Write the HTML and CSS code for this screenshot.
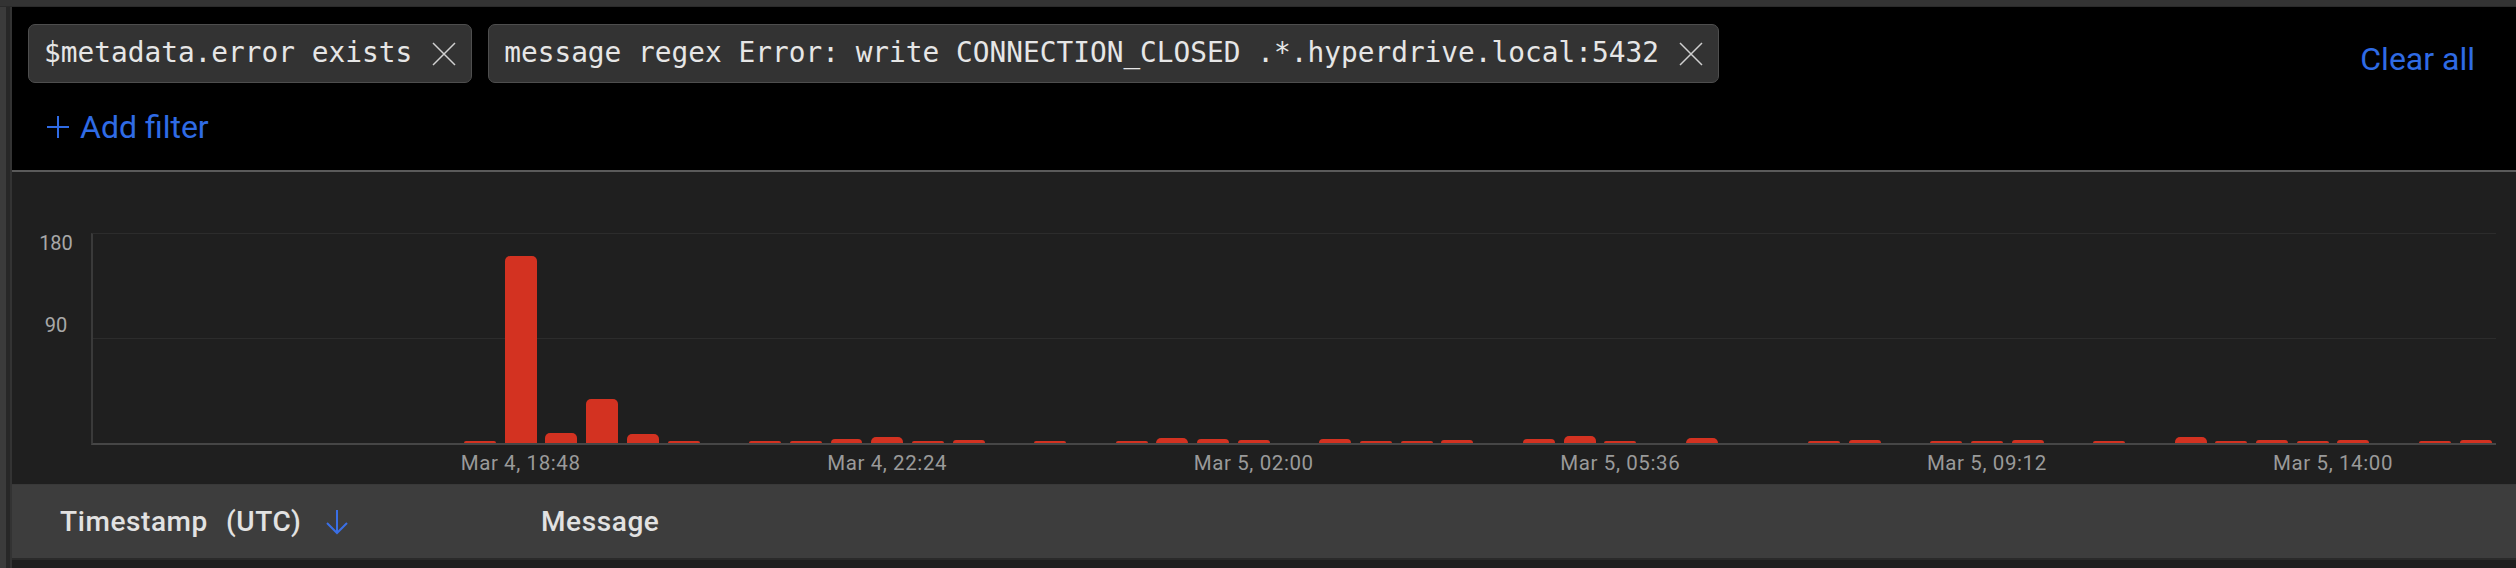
FILE: index.html
```html
<!DOCTYPE html>
<html>
<head>
<meta charset="utf-8">
<link rel="stylesheet" href="styles.css">
</head>
<body>
<div class="top-band"></div>
<div class="main">
  <div class="gutter"></div>
  <div class="content">
    <section class="filters">
      <div class="filters-left">
        <div class="chips">
          <div class="chip"><span class="chip-text">$metadata.error exists</span>
            <svg class="chip-x" viewBox="0 0 24 24" width="24" height="24"><path d="M1 1L23 23M23 1L1 23" stroke="#d0d0d0" stroke-width="1.5" fill="none"/></svg>
          </div>
          <div class="chip"><span class="chip-text">message regex Error: write CONNECTION_CLOSED .*.hyperdrive.local:5432</span>
            <svg class="chip-x" viewBox="0 0 24 24" width="24" height="24"><path d="M1 1L23 23M23 1L1 23" stroke="#d0d0d0" stroke-width="1.5" fill="none"/></svg>
          </div>
        </div>
        <div class="add-filter">
          <svg class="plus" viewBox="0 0 22 22" width="22" height="22"><path d="M11 0V22M0 11H22" stroke="#2f6be5" stroke-width="2" fill="none"/></svg>
          <span>Add filter</span>
        </div>
      </div>
      <div class="clear-all">Clear all</div>
    </section>

    <section class="chart">
      <div class="yaxis">
        <span class="ylabel">180</span>
        <span class="ylabel ylabel-mid">90</span>
      </div>
      <div class="plot">
        <div class="slot"></div><div class="slot"></div><div class="slot"></div><div class="slot"></div><div class="slot"></div>
        <div class="slot"></div><div class="slot"></div><div class="slot"></div><div class="slot"></div>
        <div class="slot"><div class="bar" style="height:2px"></div></div>
        <div class="slot"><div class="bar" style="height:187px"></div></div>
        <div class="slot"><div class="bar" style="height:10px"></div></div>
        <div class="slot"><div class="bar" style="height:44px"></div></div>
        <div class="slot"><div class="bar" style="height:9px"></div></div>
        <div class="slot"><div class="bar" style="height:2px"></div></div>
        <div class="slot"></div>
        <div class="slot"><div class="bar" style="height:2px"></div></div>
        <div class="slot"><div class="bar" style="height:2px"></div></div>
        <div class="slot"><div class="bar" style="height:4px"></div></div>
        <div class="slot"><div class="bar" style="height:6px"></div></div>
        <div class="slot"><div class="bar" style="height:2px"></div></div>
        <div class="slot"><div class="bar" style="height:3px"></div></div>
        <div class="slot"></div>
        <div class="slot"><div class="bar" style="height:2px"></div></div>
        <div class="slot"></div>
        <div class="slot"><div class="bar" style="height:2px"></div></div>
        <div class="slot"><div class="bar" style="height:5px"></div></div>
        <div class="slot"><div class="bar" style="height:4px"></div></div>
        <div class="slot"><div class="bar" style="height:3px"></div></div>
        <div class="slot"></div>
        <div class="slot"><div class="bar" style="height:4px"></div></div>
        <div class="slot"><div class="bar" style="height:2px"></div></div>
        <div class="slot"><div class="bar" style="height:2px"></div></div>
        <div class="slot"><div class="bar" style="height:3px"></div></div>
        <div class="slot"></div>
        <div class="slot"><div class="bar" style="height:4px"></div></div>
        <div class="slot"><div class="bar" style="height:7px"></div></div>
        <div class="slot"><div class="bar" style="height:2px"></div></div>
        <div class="slot"></div>
        <div class="slot"><div class="bar" style="height:5px"></div></div>
        <div class="slot"></div>
        <div class="slot"></div>
        <div class="slot"><div class="bar" style="height:2px"></div></div>
        <div class="slot"><div class="bar" style="height:3px"></div></div>
        <div class="slot"></div>
        <div class="slot"><div class="bar" style="height:2px"></div></div>
        <div class="slot"><div class="bar" style="height:2px"></div></div>
        <div class="slot"><div class="bar" style="height:3px"></div></div>
        <div class="slot"></div>
        <div class="slot"><div class="bar" style="height:2px"></div></div>
        <div class="slot"></div>
        <div class="slot"><div class="bar" style="height:6px"></div></div>
        <div class="slot"><div class="bar" style="height:2px"></div></div>
        <div class="slot"><div class="bar" style="height:3px"></div></div>
        <div class="slot"><div class="bar" style="height:2px"></div></div>
        <div class="slot"><div class="bar" style="height:3px"></div></div>
        <div class="slot"></div>
        <div class="slot"><div class="bar" style="height:2px"></div></div>
        <div class="slot"><div class="bar" style="height:3px"></div></div>
      </div>
      <div class="xlabels">
        <span class="xlabel" style="grid-column:10 / 13">Mar 4, 18:48</span>
        <span class="xlabel" style="grid-column:19 / 22">Mar 4, 22:24</span>
        <span class="xlabel" style="grid-column:28 / 31">Mar 5, 02:00</span>
        <span class="xlabel" style="grid-column:37 / 40">Mar 5, 05:36</span>
        <span class="xlabel" style="grid-column:46 / 49">Mar 5, 09:12</span>
        <span class="xlabel" style="grid-column:54 / 58">Mar 5, 14:00</span>
      </div>
    </section>

    <section class="thead">
      <div class="th th-time">
        <span class="th-words"><span>Timestamp</span><span>(UTC)</span></span>
        <svg class="sort-arrow" viewBox="0 0 24 26" width="24" height="26"><path d="M12 1V24M2 14L12 24L22 14" stroke="#3a6fe6" stroke-width="2" fill="none" stroke-linejoin="miter"/></svg>
      </div>
      <div class="th th-msg">Message</div>
    </section>
    <div class="below"></div>
  </div>
</div>
</body>
</html>
```

FILE: styles.css
```css
html, body {
  margin: 0;
  padding: 0;
}

body {
  background: #1f1f1f;
  width: 2516px;
  height: 568px;
  overflow: hidden;
  font-family: Roboto, "Liberation Sans", sans-serif;
}

.top-band {
  height: 6px;
  background: #333333;
  border-bottom: 1px solid #2a2a2a;
}

.main {
  display: flex;
  height: 561px;
}

.gutter {
  width: 12px;
  flex: none;
  background: linear-gradient(to right, #3b3b3b 0 6px, #272727 6px 10px, #333333 10px 12px);
}

.content {
  flex: 1;
  display: flex;
  flex-direction: column;
}

/* Filters */
.filters {
  height: 165px;
  box-sizing: border-box;
  background: #000;
  border-bottom: 2px solid #5a5a5a;
  display: flex;
  align-items: flex-start;
  padding: 17px 41px 0 16px;
}

.filters-left {
  flex: 1;
}

.chips {
  display: flex;
  gap: 16px;
}

.chip {
  height: 59px;
  box-sizing: border-box;
  display: flex;
  align-items: center;
  gap: 20px;
  padding: 0 15px 0 15px;
  background: #333333;
  border: 1px solid #4e4e4e;
  border-radius: 7px;
}

.chip-text {
  font-family: "DejaVu Sans Mono", "Liberation Mono", monospace;
  font-size: 27.8px;
  color: #e6e6e6;
  white-space: nowrap;
  position: relative;
  top: -1px;
}

.chip-x {
  flex: none;
}

.add-filter {
  display: flex;
  align-items: center;
  gap: 11px;
  height: 40px;
  margin: 24px 0 0 19px;
  color: #2f6be5;
  font-size: 32px;
}

.plus {
  flex: none;
}

.clear-all {
  color: #2f6be5;
  font-size: 32px;
  line-height: 40px;
  margin-top: 15px;
}

/* Chart */
.chart {
  height: 312px;
  box-sizing: border-box;
  padding: 61px 20px 0 0;
  display: grid;
  grid-template-columns: 79px 1fr;
  grid-template-rows: 212px auto;
  align-content: start;
}

.yaxis {
  display: flex;
  flex-direction: column;
  align-items: center;
  padding-left: 9px;
}

.ylabel {
  font-size: 20px;
  line-height: 20px;
  color: #a8a8a8;
}

.ylabel-mid {
  margin-top: 62px;
}

.plot {
  display: grid;
  grid-template-columns: repeat(59, 1fr);
  align-items: end;
  border-top: 1px solid #2c2c2c;
  border-left: 2px solid #3a3a3a;
  border-bottom: 2px solid #464646;
  background: linear-gradient(#2c2c2c, #2c2c2c) 0 50% / 100% 1px no-repeat;
}

.slot {
  padding: 0 4.4px;
  display: flex;
  align-items: flex-end;
  height: 100%;
}

.bar {
  width: 100%;
  background: #d33221;
  border-radius: 5px 5px 0 0;
}

.xlabels {
  grid-column: 2;
  display: grid;
  grid-template-columns: repeat(59, 1fr);
  padding-left: 2px;
  margin-top: 8px;
}

.xlabel {
  text-align: center;
  white-space: nowrap;
  font-size: 20.5px;
  line-height: 20px;
  letter-spacing: 0.6px;
  color: #9a9a9a;
}

/* Table header */
.thead {
  height: 76px;
  box-sizing: border-box;
  background: #3d3d3d;
  border-top: 1px solid #393939;
  border-bottom: 2px solid #2a2a2a;
  display: flex;
  align-items: center;
  padding-left: 48px;
}

.th {
  font-size: 28px;
  font-weight: 500;
  color: #e2e2e2;
  letter-spacing: 0.6px;
}

.th-time {
  width: 481px;
  display: flex;
  align-items: center;
  gap: 24px;
}

.th-words {
  display: flex;
  gap: 18px;
}

.sort-arrow {
  flex: none;
}

.below {
  flex: 1;
  background: #1f1f1f;
}
```
